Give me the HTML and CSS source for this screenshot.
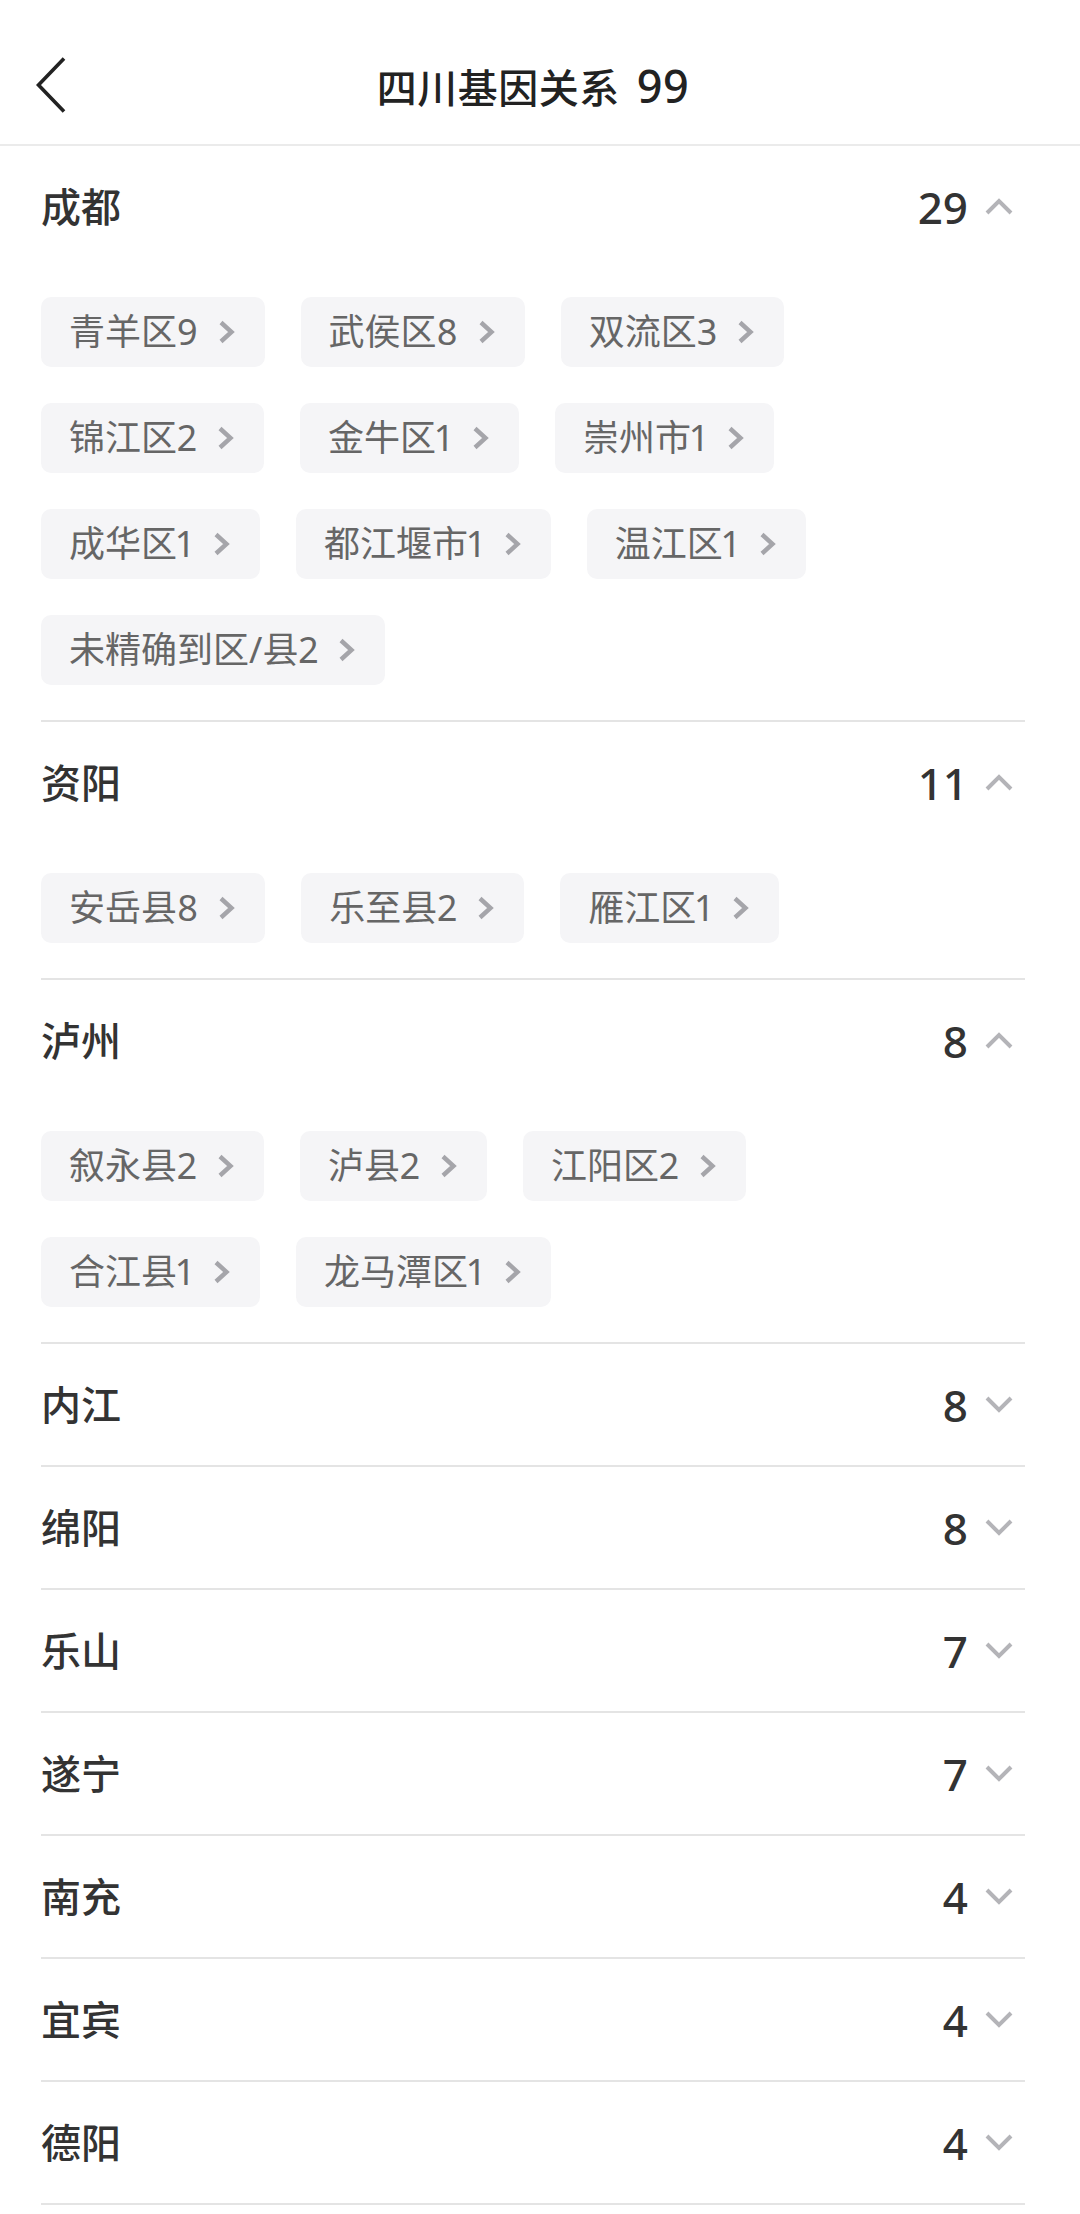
FILE: index.html
```html
<!DOCTYPE html>
<html lang="zh-CN">
<head>
<meta charset="utf-8">
<title>四川基因关系 99</title>
<link rel="stylesheet" href="styles.css">
</head>
<body>
<header class="nav">
  <div class="nav-left">
    <svg class="back" width="30" height="56" viewBox="0 0 30 56"><path d="M28 1.5 L2.5 28 L28 54.5" fill="none" stroke="#222" stroke-width="3.6"/></svg>
  </div>
  <h1 class="nav-title">四川基因关系 <span class="nav-num">99</span></h1>
  <div class="nav-right"></div>
</header>

<main class="list">
  <section class="group">
    <div class="group-head">
      <span class="group-name">成都</span>
      <span class="group-meta"><span class="count">29</span><svg class="arrow" width="28" height="17" viewBox="0 0 28 17"><path d="M2 15 L14 3 L26 15" fill="none" stroke="#b4b4b8" stroke-width="4"/></svg></span>
    </div>
    <div class="tags">
      <a class="tag">青羊区9<svg class="chev" width="17" height="24" viewBox="0 0 17 24"><path d="M3 2.5 L13.5 12 L3 21.5" fill="none" stroke="#a5a5aa" stroke-width="4.4"/></svg></a>
      <a class="tag">武侯区8<svg class="chev" width="17" height="24" viewBox="0 0 17 24"><path d="M3 2.5 L13.5 12 L3 21.5" fill="none" stroke="#a5a5aa" stroke-width="4.4"/></svg></a>
      <a class="tag">双流区3<svg class="chev" width="17" height="24" viewBox="0 0 17 24"><path d="M3 2.5 L13.5 12 L3 21.5" fill="none" stroke="#a5a5aa" stroke-width="4.4"/></svg></a>
      <a class="tag">锦江区2<svg class="chev" width="17" height="24" viewBox="0 0 17 24"><path d="M3 2.5 L13.5 12 L3 21.5" fill="none" stroke="#a5a5aa" stroke-width="4.4"/></svg></a>
      <a class="tag">金牛区1<svg class="chev" width="17" height="24" viewBox="0 0 17 24"><path d="M3 2.5 L13.5 12 L3 21.5" fill="none" stroke="#a5a5aa" stroke-width="4.4"/></svg></a>
      <a class="tag">崇州市1<svg class="chev" width="17" height="24" viewBox="0 0 17 24"><path d="M3 2.5 L13.5 12 L3 21.5" fill="none" stroke="#a5a5aa" stroke-width="4.4"/></svg></a>
      <a class="tag">成华区1<svg class="chev" width="17" height="24" viewBox="0 0 17 24"><path d="M3 2.5 L13.5 12 L3 21.5" fill="none" stroke="#a5a5aa" stroke-width="4.4"/></svg></a>
      <a class="tag">都江堰市1<svg class="chev" width="17" height="24" viewBox="0 0 17 24"><path d="M3 2.5 L13.5 12 L3 21.5" fill="none" stroke="#a5a5aa" stroke-width="4.4"/></svg></a>
      <a class="tag">温江区1<svg class="chev" width="17" height="24" viewBox="0 0 17 24"><path d="M3 2.5 L13.5 12 L3 21.5" fill="none" stroke="#a5a5aa" stroke-width="4.4"/></svg></a>
      <a class="tag">未精确到区/县2<svg class="chev" width="17" height="24" viewBox="0 0 17 24"><path d="M3 2.5 L13.5 12 L3 21.5" fill="none" stroke="#a5a5aa" stroke-width="4.4"/></svg></a>
    </div>
  </section>

  <section class="group">
    <div class="group-head">
      <span class="group-name">资阳</span>
      <span class="group-meta"><span class="count">11</span><svg class="arrow" width="28" height="17" viewBox="0 0 28 17"><path d="M2 15 L14 3 L26 15" fill="none" stroke="#b4b4b8" stroke-width="4"/></svg></span>
    </div>
    <div class="tags">
      <a class="tag">安岳县8<svg class="chev" width="17" height="24" viewBox="0 0 17 24"><path d="M3 2.5 L13.5 12 L3 21.5" fill="none" stroke="#a5a5aa" stroke-width="4.4"/></svg></a>
      <a class="tag">乐至县2<svg class="chev" width="17" height="24" viewBox="0 0 17 24"><path d="M3 2.5 L13.5 12 L3 21.5" fill="none" stroke="#a5a5aa" stroke-width="4.4"/></svg></a>
      <a class="tag">雁江区1<svg class="chev" width="17" height="24" viewBox="0 0 17 24"><path d="M3 2.5 L13.5 12 L3 21.5" fill="none" stroke="#a5a5aa" stroke-width="4.4"/></svg></a>
    </div>
  </section>

  <section class="group">
    <div class="group-head">
      <span class="group-name">泸州</span>
      <span class="group-meta"><span class="count">8</span><svg class="arrow" width="28" height="17" viewBox="0 0 28 17"><path d="M2 15 L14 3 L26 15" fill="none" stroke="#b4b4b8" stroke-width="4"/></svg></span>
    </div>
    <div class="tags">
      <a class="tag">叙永县2<svg class="chev" width="17" height="24" viewBox="0 0 17 24"><path d="M3 2.5 L13.5 12 L3 21.5" fill="none" stroke="#a5a5aa" stroke-width="4.4"/></svg></a>
      <a class="tag">泸县2<svg class="chev" width="17" height="24" viewBox="0 0 17 24"><path d="M3 2.5 L13.5 12 L3 21.5" fill="none" stroke="#a5a5aa" stroke-width="4.4"/></svg></a>
      <a class="tag">江阳区2<svg class="chev" width="17" height="24" viewBox="0 0 17 24"><path d="M3 2.5 L13.5 12 L3 21.5" fill="none" stroke="#a5a5aa" stroke-width="4.4"/></svg></a>
      <a class="tag">合江县1<svg class="chev" width="17" height="24" viewBox="0 0 17 24"><path d="M3 2.5 L13.5 12 L3 21.5" fill="none" stroke="#a5a5aa" stroke-width="4.4"/></svg></a>
      <a class="tag">龙马潭区1<svg class="chev" width="17" height="24" viewBox="0 0 17 24"><path d="M3 2.5 L13.5 12 L3 21.5" fill="none" stroke="#a5a5aa" stroke-width="4.4"/></svg></a>
    </div>
  </section>

  <section class="group">
    <div class="group-head">
      <span class="group-name">内江</span>
      <span class="group-meta"><span class="count">8</span><svg class="arrow" width="28" height="17" viewBox="0 0 28 17"><path d="M2 2 L14 14 L26 2" fill="none" stroke="#b4b4b8" stroke-width="4"/></svg></span>
    </div>
  </section>
  <section class="group">
    <div class="group-head">
      <span class="group-name">绵阳</span>
      <span class="group-meta"><span class="count">8</span><svg class="arrow" width="28" height="17" viewBox="0 0 28 17"><path d="M2 2 L14 14 L26 2" fill="none" stroke="#b4b4b8" stroke-width="4"/></svg></span>
    </div>
  </section>
  <section class="group">
    <div class="group-head">
      <span class="group-name">乐山</span>
      <span class="group-meta"><span class="count">7</span><svg class="arrow" width="28" height="17" viewBox="0 0 28 17"><path d="M2 2 L14 14 L26 2" fill="none" stroke="#b4b4b8" stroke-width="4"/></svg></span>
    </div>
  </section>
  <section class="group">
    <div class="group-head">
      <span class="group-name">遂宁</span>
      <span class="group-meta"><span class="count">7</span><svg class="arrow" width="28" height="17" viewBox="0 0 28 17"><path d="M2 2 L14 14 L26 2" fill="none" stroke="#b4b4b8" stroke-width="4"/></svg></span>
    </div>
  </section>
  <section class="group">
    <div class="group-head">
      <span class="group-name">南充</span>
      <span class="group-meta"><span class="count">4</span><svg class="arrow" width="28" height="17" viewBox="0 0 28 17"><path d="M2 2 L14 14 L26 2" fill="none" stroke="#b4b4b8" stroke-width="4"/></svg></span>
    </div>
  </section>
  <section class="group">
    <div class="group-head">
      <span class="group-name">宜宾</span>
      <span class="group-meta"><span class="count">4</span><svg class="arrow" width="28" height="17" viewBox="0 0 28 17"><path d="M2 2 L14 14 L26 2" fill="none" stroke="#b4b4b8" stroke-width="4"/></svg></span>
    </div>
  </section>
  <section class="group">
    <div class="group-head">
      <span class="group-name">德阳</span>
      <span class="group-meta"><span class="count">4</span><svg class="arrow" width="28" height="17" viewBox="0 0 28 17"><path d="M2 2 L14 14 L26 2" fill="none" stroke="#b4b4b8" stroke-width="4"/></svg></span>
    </div>
  </section>
</main>
</body>
</html>
```

FILE: styles.css
```css
* { box-sizing: border-box; }

html, body {
  margin: 0;
  padding: 0;
  background: #ffffff;
}

body {
  font-family: "Noto Sans", "Noto Sans CJK SC", sans-serif;
  color: #333;
}

.nav {
  display: grid;
  grid-template-columns: 1fr auto 1fr;
  align-items: center;
  height: 146px;
  padding-top: 26px;
  border-bottom: 2px solid #ebebeb;
}

.nav-left {
  display: flex;
  align-items: center;
  padding-left: 36px;
}

.back { display: block; }

.nav-title {
  margin: 0;
  font-size: 40px;
  font-weight: 500;
  color: #222;
  line-height: 1;
  padding-right: 14px;
  word-spacing: 6px;
  letter-spacing: 0.5px;
}

.nav-num {
  font-size: 45px;
}

.list {
  margin: 0 55px 0 41px;
}

.group {
  border-bottom: 2px solid #e4e4e4;
}

.group-head {
  display: flex;
  align-items: center;
  justify-content: space-between;
  height: 121px;
}

.group-name {
  font-size: 40px;
  font-weight: 500;
  color: #333;
  line-height: 1;
}

.group-meta {
  display: flex;
  align-items: center;
  gap: 17px;
  padding-right: 12px;
}

.count {
  font-size: 44px;
  font-weight: 500;
  color: #333;
  line-height: 1;
}

.arrow { display: block; }

.tags {
  display: flex;
  flex-wrap: wrap;
  gap: 36px 36px;
  max-width: 880px;
  padding: 30px 0 35px;
}

.tag {
  display: inline-flex;
  align-items: center;
  gap: 20px;
  height: 70px;
  padding: 0 30px 0 28px;
  background: #f5f5f7;
  border-radius: 10px;
  font-size: 36px;
  font-variant-numeric: proportional-nums;
  color: #666;
  line-height: 1;
  text-decoration: none;
}

.chev { display: block; }
```
